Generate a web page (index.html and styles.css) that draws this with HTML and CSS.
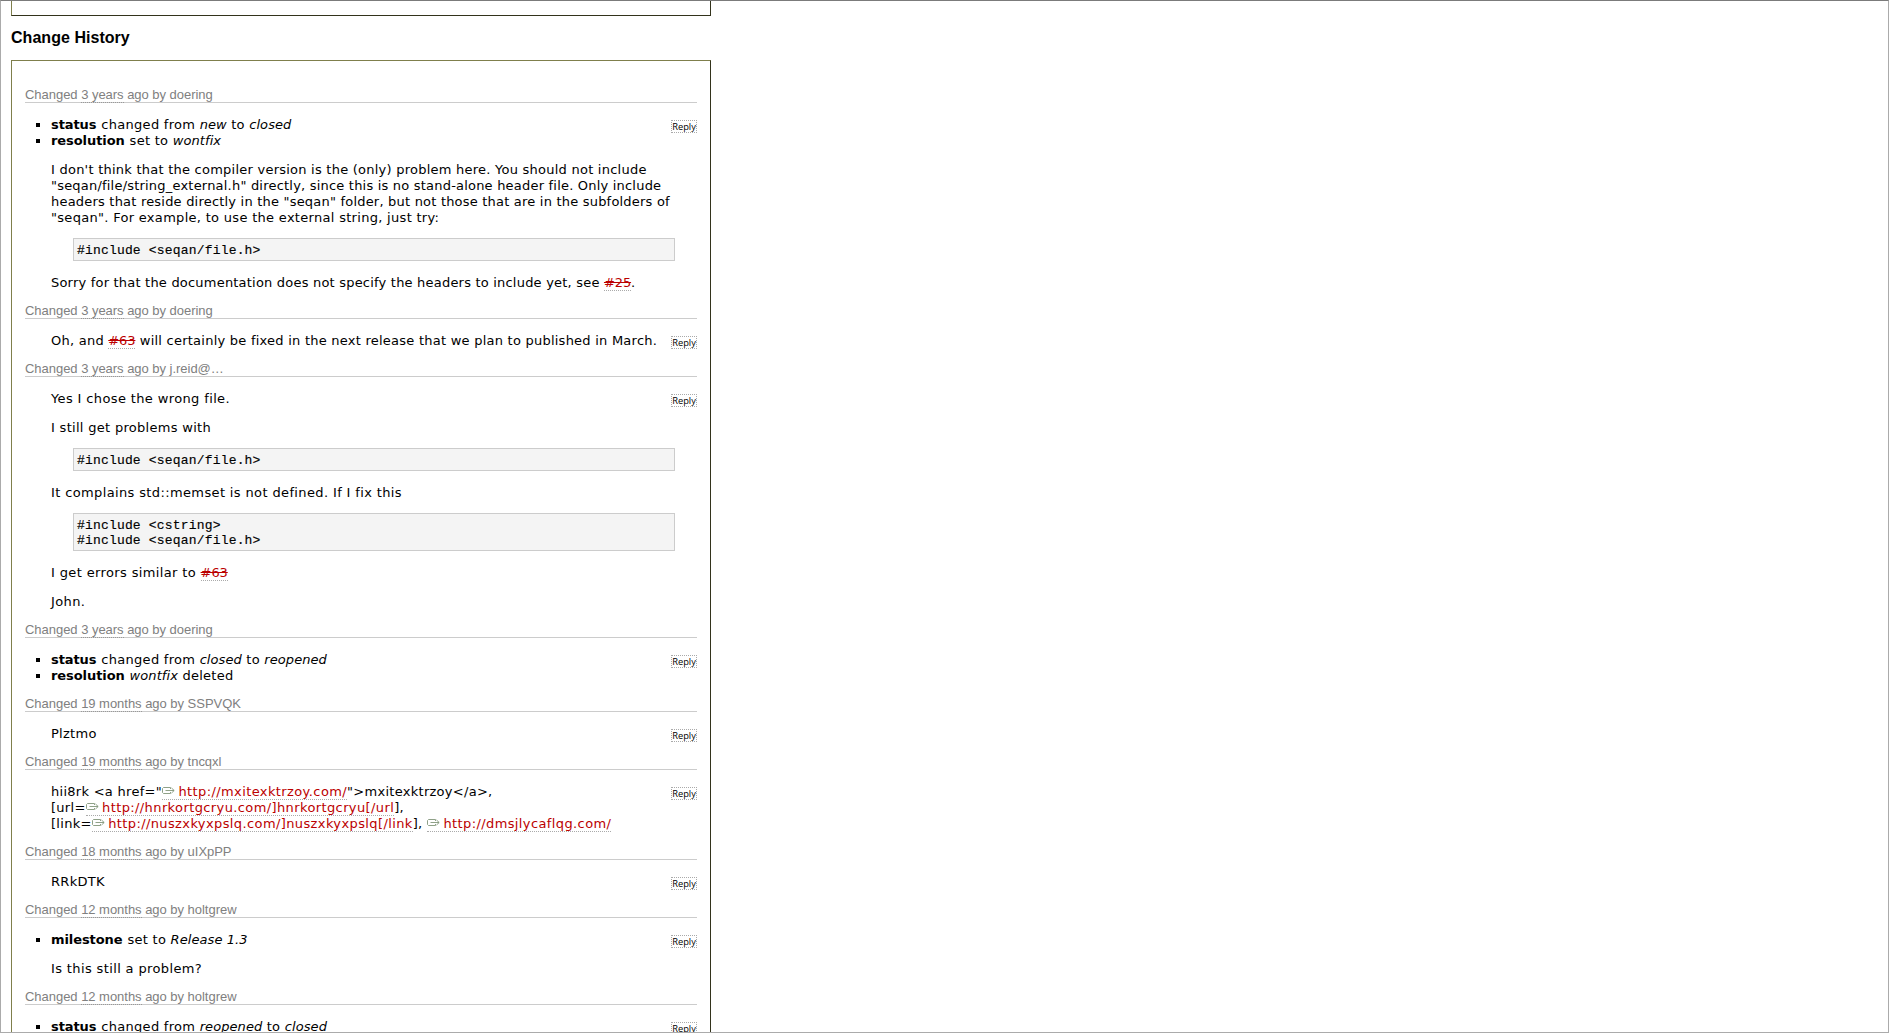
FILE: index.html
```html
<!DOCTYPE html>
<html lang="en">
<head>
<meta charset="utf-8">
<title>Change History</title>
<link rel="stylesheet" href="styles.css">
</head>
<body>
<svg width="0" height="0" class="defs"><symbol id="ext" viewBox="0 0 13 8"><path d="M8.500 2V.500H1.500L.500 1.500v4l1 1h7V5M3.500 3.500H12M9.500 1l2.700 2.500L9.500 6" fill="none" stroke="#82967a" stroke-width=".9"/></symbol></svg>
<main class="page">
<section class="panel panel-top"></section>
<h2 class="title">Change History</h2>
<section class="panel history">

<article class="change">
<h3 class="stamp">Changed <a class="date">3 years</a> ago by doering</h3>
<div class="body">
<button class="reply">Reply</button>
<ul class="props"><li><strong>status</strong> changed from <em>new</em> to <em>closed</em></li><li><strong>resolution</strong> set to <em>wontfix</em></li></ul>
<p class="text long"><span class="loose">I don't think that the compiler version is the (only) problem here. You should not include</span><br>"seqan/file/string_external.h" directly, since this is no stand-alone header file. Only include<br>headers that reside directly in the "seqan" folder, but not those that are in the subfolders of<br><span class="looser">"seqan". For example, to use the external string, just try:</span></p>
<pre class="code">#include &lt;seqan/file.h&gt;</pre>
<p class="text long">Sorry for that the documentation does not specify the headers to include yet, see <a class="link closed">#25</a>.</p>
</div>
</article>

<article class="change">
<h3 class="stamp">Changed <a class="date">3 years</a> ago by doering</h3>
<div class="body">
<button class="reply">Reply</button>
<p class="text"><span class="loose">Oh, and <a class="link closed">#63</a> will certainly be fixed in the next release that we plan to published in March.</span></p>
</div>
</article>

<article class="change">
<h3 class="stamp">Changed <a class="date">3 years</a> ago by j.reid@…</h3>
<div class="body">
<button class="reply">Reply</button>
<p class="text wide">Yes I chose the wrong file.</p>
<p class="text looser">I still get problems with</p>
<pre class="code">#include &lt;seqan/file.h&gt;</pre>
<p class="text wide">It complains std::memset is not defined. If I fix this</p>
<pre class="code">#include &lt;cstring&gt;
#include &lt;seqan/file.h&gt;</pre>
<p class="text wide">I get errors similar to <a class="link closed">#63</a></p>
<p class="text wide">John.</p>
</div>
</article>

<article class="change">
<h3 class="stamp">Changed <a class="date">3 years</a> ago by doering</h3>
<div class="body">
<button class="reply">Reply</button>
<ul class="props"><li><strong>status</strong> changed from <em>closed</em> to <em>reopened</em></li><li><strong>resolution</strong> <em>wontfix</em> deleted</li></ul>
</div>
</article>

<article class="change">
<h3 class="stamp">Changed <a class="date">19 months</a> ago by SSPVQK</h3>
<div class="body">
<button class="reply">Reply</button>
<p class="text">Plztmo</p>
</div>
</article>

<article class="change">
<h3 class="stamp">Changed <a class="date">19 months</a> ago by tncqxl</h3>
<div class="body">
<button class="reply">Reply</button>
<p class="text">hii8rk &lt;a href="<a class="link"><svg class="ext"><use href="#ext"/></svg>http://mxitexktrzoy.com/</a>"&gt;mxitexktrzoy&lt;/a&gt;,<br>[url=<a class="link"><svg class="ext"><use href="#ext"/></svg>http://hnrkortgcryu.com/]hnrkortgcryu[/url</a>],<br>[link=<a class="link"><svg class="ext"><use href="#ext"/></svg>http://nuszxkyxpslq.com/]nuszxkyxpslq[/link</a>], <a class="link"><svg class="ext"><use href="#ext"/></svg>http://dmsjlycaflqg.com/</a></p>
</div>
</article>

<article class="change">
<h3 class="stamp">Changed <a class="date">18 months</a> ago by uIXpPP</h3>
<div class="body">
<button class="reply">Reply</button>
<p class="text">RRkDTK</p>
</div>
</article>

<article class="change">
<h3 class="stamp">Changed <a class="date">12 months</a> ago by holtgrew</h3>
<div class="body">
<button class="reply">Reply</button>
<ul class="props"><li><strong>milestone</strong> set to <em>Release 1.3</em></li></ul>
<p class="text wide">Is this still a problem?</p>
</div>
</article>

<article class="change">
<h3 class="stamp">Changed <a class="date">12 months</a> ago by holtgrew</h3>
<div class="body">
<button class="reply">Reply</button>
<ul class="props"><li><strong>status</strong> changed from <em>reopened</em> to <em>closed</em></li></ul>
</div>
</article>

</section>
</main>
</body>
</html>
```
FILE: styles.css
```css
* { box-sizing: border-box; }

body {
  margin: 0;
  background: #fff;
  color: #000;
  font: 13px/16px "DejaVu Sans", Verdana, sans-serif;
}

.defs { display: block; }

.page {
  height: 1033px;
  padding-left: 10px;
  overflow: hidden;
  border: 1px solid #ababab;
  border-top-color: #7b7b7b;
}

.panel {
  width: 700px;
  border: 1px solid;
  border-color: #7f7f4c #33331c #33331c #7f7f4c;
}

.panel-top {
  height: 15px;
  border-top: 0;
}

.title {
  height: 44px;
  margin: 0;
  font: bold 16px/44px "Liberation Sans", Arial, sans-serif;
  letter-spacing: 0.04px;
}

.history { padding: 13px 13px 0; }

.stamp {
  height: 16px;
  margin: 13px 0;
  border-bottom: 1px solid #ccc;
  color: #808080;
  font: 13px/15px "Liberation Sans", Arial, sans-serif;
  letter-spacing: -0.03px;
}

.date { border-bottom: 1px dotted #999; }

.body { padding-left: 26px; }

.reply {
  float: right;
  width: 26px;
  height: 13px;
  margin: 4px 0 0;
  padding: 0;
  border: 1px dotted #aaa;
  background: #fff;
  color: #000;
  font: 500 9.300px/11px "Open Sans", sans-serif;
}

.props,
.text {
  margin: 0 0 12px;
  padding: 1px 0 0;
  letter-spacing: 0.28px;
}

.props:last-child,
.text:last-child { margin-bottom: -1px; }

.props { list-style: square; }

.props strong {
  margin-right: 0.500px;
  letter-spacing: -0.08px;
}

.props em { letter-spacing: 0.08px; }

.long { letter-spacing: 0.205px; }

.loose { letter-spacing: 0.24px; }

.looser { letter-spacing: 0.3px; }

.wide { letter-spacing: 0.37px; }

.code {
  width: 602px;
  margin: 0 0 13px 22px;
  padding: 4px 3px 2px;
  border: 1px solid #ccc;
  background: #f4f4f4;
  font: 13px/15px "Liberation Mono", "Courier New", monospace;
  letter-spacing: 0.18px;
  -webkit-text-stroke: 0.15px;
}

.link {
  border-bottom: 1px dotted #aaa;
  color: #b00;
  letter-spacing: 0.39px;
}

.closed {
  letter-spacing: -0.1px;
  text-decoration: line-through;
}

.ext {
  width: 13px;
  height: 8px;
  margin-right: 3.500px;
  vertical-align: 1px;
}
```
